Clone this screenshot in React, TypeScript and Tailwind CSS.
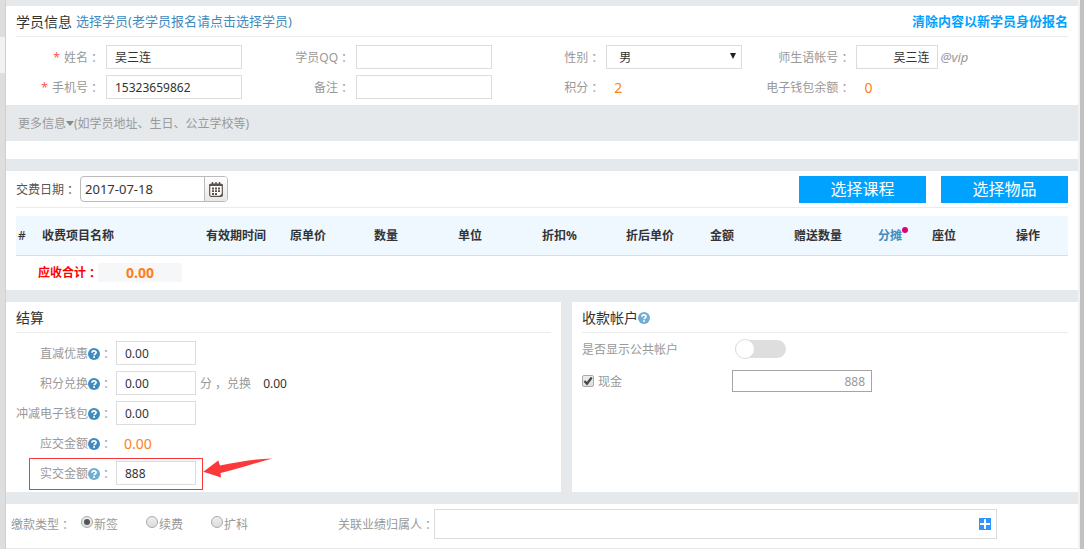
import { useState } from "react";
import type { ReactNode } from "react";
import clsx from "clsx";

type Column = { title: string; width: string; link?: boolean };

const columns: Column[] = [
    { title: "#", width: "w-[24px]" },
    { title: "收费项目名称", width: "" },
    { title: "有效期时间", width: "w-[84px]" },
    { title: "原单价", width: "w-[84px]" },
    { title: "数量", width: "w-[84px]" },
    { title: "单位", width: "w-[84px]" },
    { title: "折扣%", width: "w-[84px]" },
    { title: "折后单价", width: "w-[84px]" },
    { title: "金额", width: "w-[84px]" },
    { title: "赠送数量", width: "w-[84px]" },
    { title: "分摊", width: "w-[54px]", link: true },
    { title: "座位", width: "w-[84px]" },
    { title: "操作", width: "w-[54px]" },
];

const payTypes = ["新签", "续费", "扩科"];

const inputClass = "h-6 min-w-0 border border-[#dcdcdc] bg-white px-2 text-[#333] outline-none";

// The colon sits in the middle of its cell
function Colon() {
    return <span className="font-['Noto_Sans_CJK_TC',sans-serif]">：</span>;
}

function HelpIcon({ light }: { light?: boolean }) {
    return (
        <svg viewBox="0 0 12 12" className={clsx("size-3 shrink-0", light ? "text-[#6fadd3]" : "text-[#3f8bbf]")}>
            <circle cx="6" cy="6" r="6" fill="currentColor" />
            <path d="M4 4.8C4 2.3 8.1 2.4 8.1 4.6C8.1 6 6.1 5.9 6.1 7.3" fill="none" stroke="#fff" strokeWidth="1.7" />
            <rect x="5.2" y="8.2" width="1.8" height="1.7" fill="#fff" />
        </svg>
    );
}

function Field({ id, label, required, children }: { id: string; label: string; required?: boolean; children: ReactNode }) {
    return (
        <div className="flex h-6 items-center">
            <label htmlFor={id} className="flex w-[100px] shrink-0 items-center justify-end pr-1.5 text-[#999]">
                {required && <span className="mr-1 text-[#f55]">*</span>}
                {label}
                <Colon />
            </label>
            {children}
        </div>
    );
}

function SettleRow({ id, label, light, children }: { id: string; label: string; light?: boolean; children: ReactNode }) {
    return (
        <div className="relative flex h-6 items-center">
            <label htmlFor={id} className="mr-1 flex w-[106px] shrink-0 items-center justify-end text-[#999]">
                {label}
                <span className="pt-0.5">
                    <HelpIcon light={light} />
                </span>
                <Colon />
            </label>
            {children}
        </div>
    );
}

function PanelTitle({ children }: { children: ReactNode }) {
    return <div className="mx-2.5 flex h-[31px] items-center border-b border-[#ebebeb]">{children}</div>;
}

function StudentPanel() {
    return (
        <section className="bg-white pb-[18px]">
            <PanelTitle>
                <h2 className="mr-1 text-[14px] text-[#333]">学员信息</h2>
                <a href="#" className="text-[13px] text-[#428bbf]">选择学员(老学员报名请点击选择学员)</a>
                <a href="#" className="ml-auto text-[13px] font-bold text-[#00a2ff]">清除内容以新学员身份报名</a>
            </PanelTitle>
            <div className="grid grid-cols-[minmax(0,7fr)_minmax(0,7fr)_minmax(0,7fr)_minmax(0,9fr)] gap-y-1.5 pt-2 pb-1.5">
                <Field id="name" label="姓名" required>
                    <input id="name" defaultValue="吴三连" className={clsx(inputClass, "mr-3.5 flex-1")} />
                </Field>
                <Field id="qq" label="学员QQ">
                    <input id="qq" className={clsx(inputClass, "mr-3.5 flex-1")} />
                </Field>
                <Field id="sex" label="性别">
                    <div className="relative mr-3.5 flex-1">
                        <select id="sex" className="block h-6 w-full appearance-none border border-[#dcdcdc] bg-white px-3 text-[#333] outline-none">
                            <option>男</option>
                            <option>女</option>
                        </select>
                        <svg viewBox="0 0 6 6" className="pointer-events-none absolute top-2 right-1.5 size-1.5">
                            <path d="M0 0H6L3 6Z" fill="#222" />
                        </svg>
                    </div>
                </Field>
                <Field id="account" label="师生语帐号">
                    <input id="account" defaultValue="吴三连" className={clsx(inputClass, "w-[82px] text-right")} />
                    <span className="ml-0.5 text-[13px] text-[#999] italic">@vip</span>
                </Field>
                <Field id="phone" label="手机号" required>
                    <input id="phone" defaultValue="15323659862" className={clsx(inputClass, "mr-3.5 flex-1")} />
                </Field>
                <Field id="remark" label="备注">
                    <input id="remark" className={clsx(inputClass, "mr-3.5 flex-1")} />
                </Field>
                <Field id="points" label="积分">
                    <output id="points" className="px-2 text-[14px] text-[#ff7f1a]">2</output>
                </Field>
                <Field id="wallet" label="电子钱包余额">
                    <output id="wallet" className="px-2 text-[14px] text-[#ff7f1a]">0</output>
                </Field>
            </div>
            <button type="button" className="flex h-9 w-full items-center bg-[#e5e9ec] px-3 text-[#999]">
                更多信息
                <svg viewBox="0 0 8 5" className="h-[5px] w-2">
                    <path d="M0 0H8L4 5Z" fill="#888" />
                </svg>
                (如学员地址、生日、公立学校等)
            </button>
        </section>
    );
}

function CalendarIcon() {
    return (
        <svg viewBox="0 0 14 15" className="h-[15px] w-3.5">
            <rect x="0.7" y="2" width="12.6" height="12.3" rx="1.5" fill="#fff" stroke="#5c504c" strokeWidth="1.2" />
            <path d="M0.5 2H13.5V4H0.5Z" fill="#5c504c" />
            <path d="M3.5 0V3M7 0V3M10.5 0V3" stroke="#5c504c" strokeWidth="1.4" />
            <path d="M3 6.5H5M6 6.5H8M9 6.5H11M3 9.2H5M6 9.2H8M9 9.2H11M3 12H5M6 12H8" stroke="#5c504c" strokeWidth="1.8" />
            <path d="M13.5 11V14.5H10Z" fill="#5c504c" />
        </svg>
    );
}

function FeePanel() {
    return (
        <section className="bg-white px-2.5">
            <div className="flex h-[37px] items-center gap-[15px] border-b border-[#ebebeb]">
                <div className="mr-auto flex items-center">
                    <label htmlFor="pay-date" className="mr-1 flex items-center text-[#555]">
                        交费日期
                        <Colon />
                    </label>
                    <div className="flex h-[26px] w-[148px] overflow-hidden rounded border border-[#bbb]">
                        <input id="pay-date" defaultValue="2017-07-18" className="min-w-0 flex-1 px-1 text-[13px] text-[#333] outline-none" />
                        <button type="button" aria-label="选择日期" className="flex w-[23px] items-center justify-center border-l border-[#bbb] bg-linear-to-b from-white to-[#e8e8e8]">
                            <CalendarIcon />
                        </button>
                    </div>
                </div>
                <button type="button" className="h-[27px] w-[127px] bg-[#00a2ff] text-[16px] text-white">选择课程</button>
                <button type="button" className="h-[27px] w-[127px] bg-[#00a2ff] text-[16px] text-white">选择物品</button>
            </div>
            <table className="mt-2 w-full table-fixed">
                <thead>
                    <tr className="h-[39px] border-b border-[#cde3ea] bg-[#eff7ff] text-left text-[#333]">
                        {columns.map((col) => (
                            <th key={col.title} scope="col" className={clsx("p-0 pl-0.5 whitespace-nowrap", col.width, col.title === "#" ? "font-medium" : "font-bold")}>
                                {col.link ? (
                                    <a href="#" className="relative text-[#428bbf]">
                                        {col.title}
                                        <span className="absolute top-0 -right-1.5 size-1.5 rounded-full bg-[#e0007a]" />
                                    </a>
                                ) : (
                                    col.title
                                )}
                            </th>
                        ))}
                    </tr>
                </thead>
                <tbody>
                    <tr className="h-[35px]">
                        <td colSpan={columns.length} className="p-0 pl-[22px]">
                            <div className="flex items-center font-bold">
                                <span className="flex items-center text-[#f00]">
                                    应收合计
                                    <Colon />
                                </span>
                                <span className="w-[84px] bg-[#f5f7f9] text-center text-[14px] text-[#ff7f1a]">0.00</span>
                            </div>
                        </td>
                    </tr>
                </tbody>
            </table>
        </section>
    );
}

function SettlePanel() {
    return (
        <section className="bg-white pb-[7px]">
            <PanelTitle>
                <h2 className="text-[14px] text-[#333]">结算</h2>
            </PanelTitle>
            <div className="flex flex-col gap-1.5 pt-2">
                <SettleRow id="discount" label="直减优惠">
                    <input id="discount" defaultValue="0.00" className={clsx(inputClass, "w-20")} />
                </SettleRow>
                <SettleRow id="exchange" label="积分兑换">
                    <input id="exchange" defaultValue="0.00" className={clsx(inputClass, "w-20")} />
                    <span className="ml-1 text-[#999]">分 ，兑换</span>
                    <span className="ml-3 text-[#333]">0.00</span>
                </SettleRow>
                <SettleRow id="wallet-pay" label="冲减电子钱包">
                    <input id="wallet-pay" defaultValue="0.00" className={clsx(inputClass, "w-20")} />
                </SettleRow>
                <SettleRow id="due" label="应交金额">
                    <output id="due" className="px-2 text-[14px] text-[#ff7f1a]">0.00</output>
                </SettleRow>
                <SettleRow id="paid" label="实交金额" light>
                    <input id="paid" defaultValue="888" className={clsx(inputClass, "w-20")} />
                    <div className="pointer-events-none absolute -top-[3px] left-[23px] h-8 w-[174px] border border-[#f8393c]" />
                    <svg viewBox="0 0 70 20" className="pointer-events-none absolute -top-[3px] left-[197px] h-5 w-[70px]">
                        <path d="M0.3 13.8L15.3 2.6L17 7.6C34 4.4 50 1 69.6 0.4C52 5 35 11 17.5 15L18 19.4Z" fill="#fb393b" />
                    </svg>
                </SettleRow>
            </div>
        </section>
    );
}

function AccountPanel() {
    const [shared, setShared] = useState(false);

    return (
        <section className="bg-white">
            <PanelTitle>
                <h2 className="text-[14px] text-[#333]">收款帐户</h2>
                <span className="pt-0.5">
                    <HelpIcon light />
                </span>
            </PanelTitle>
            <div className="flex flex-col gap-2 px-2.5 pt-1 text-[#999]">
                <div className="flex h-6 items-center">
                    <label htmlFor="shared" className="w-[153px]">是否显示公共帐户</label>
                    <input
                        id="shared"
                        type="checkbox"
                        role="switch"
                        checked={shared}
                        onChange={(e) => setShared(e.target.checked)}
                        className="flex h-[18px] w-[51px] appearance-none items-center rounded-full bg-[#dedede] before:size-5 before:shrink-0 before:rounded-full before:border before:border-[#dedede] before:bg-white checked:justify-end checked:bg-[#00a2ff]"
                    />
                </div>
                <div className="flex h-6 items-center">
                    <label className="flex w-[150px] items-center gap-1">
                        <span className="relative size-3">
                            <input
                                type="checkbox"
                                defaultChecked
                                className="peer block size-3 appearance-none rounded-xs border border-[#aaa] bg-linear-to-b from-[#eee] to-[#ddd]"
                            />
                            <svg viewBox="0 0 12 12" className="pointer-events-none absolute inset-0 hidden size-3 peer-checked:block">
                                <path d="M2.5 6L5 8.7L9.7 2.5" fill="none" stroke="#444" strokeWidth="2.2" />
                            </svg>
                        </span>
                        现金
                    </label>
                    <input aria-label="现金金额" defaultValue="888" className="h-[22px] w-[140px] border border-[#a5a5a5] px-1.5 text-right outline-none" />
                </div>
            </div>
        </section>
    );
}

function PayTypePanel() {
    const [payType, setPayType] = useState("新签");

    return (
        <section className="flex h-11 items-center bg-white pr-[81px] pb-1 pl-[5px] text-[#999]">
            <fieldset className="flex w-[327px] shrink-0 items-center">
                <legend className="float-left mr-2.5 flex items-center">
                    缴款类型
                    <Colon />
                </legend>
                <div className="flex gap-7">
                    {payTypes.map((type) => (
                        <label key={type} className="flex items-center gap-px">
                            <input
                                type="radio"
                                name="pay-type"
                                checked={payType === type}
                                onChange={() => setPayType(type)}
                                className="mb-1 flex size-3 appearance-none items-center justify-center rounded-full border border-[#aaa] bg-linear-to-b from-[#eee] to-[#ddd] before:size-1.5 before:rounded-full checked:before:bg-[#555]"
                            />
                            {type}
                        </label>
                    ))}
                </div>
            </fieldset>
            <label htmlFor="owner" className="flex shrink-0 items-center">
                关联业绩归属人
                <Colon />
            </label>
            <div className="relative flex-1">
                <input id="owner" className="block h-[30px] w-full border border-[#dcdcdc] px-2 text-[#333] outline-none" />
                <button type="button" aria-label="添加" className="absolute top-[9px] right-1.5 size-3">
                    <svg viewBox="0 0 12 12" className="size-3">
                        <rect width="12" height="12" fill="#2f94ff" />
                        <path d="M6 1V11M1 6H11" stroke="#fff" strokeWidth="2" />
                    </svg>
                </button>
            </div>
        </section>
    );
}

export default function App() {
    return (
        <div className="flex min-h-screen bg-[#e5e9ec] font-['Noto_Sans','Noto_Sans_CJK_SC',sans-serif] text-[12px] leading-[19px]">
            <aside className="w-1.5 shrink-0 border-r border-[#cfcfcf] bg-[#dedede] pt-[37px]">
                <div className="h-9 bg-[#f2f2f2]" />
            </aside>
            <main className="flex min-w-0 flex-1 flex-col gap-3 pt-1.5">
                <StudentPanel />
                <FeePanel />
                <div className="grid grid-cols-[555fr_506fr] gap-[11px]">
                    <SettlePanel />
                    <AccountPanel />
                </div>
                <PayTypePanel />
            </main>
            <div className="w-1.5 shrink-0 border-l-2 border-[#f1f1f1] bg-[#c1c1c1]" />
        </div>
    );
}
